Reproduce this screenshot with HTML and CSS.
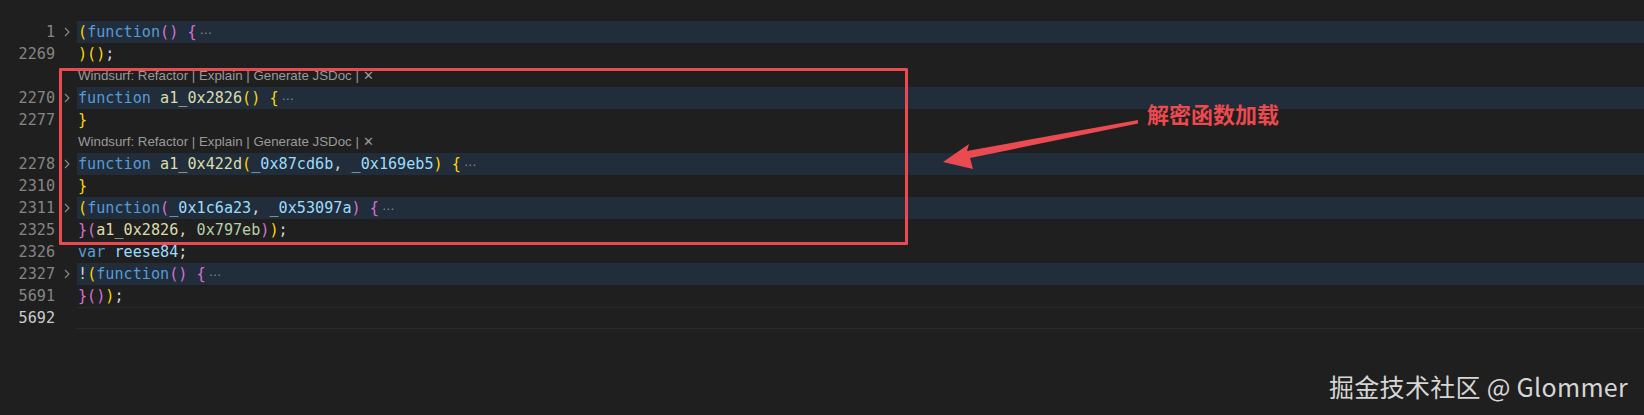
FILE: index.html
```html
<!DOCTYPE html>
<html lang="zh">
<head>
<meta charset="utf-8">
<title>Editor</title>
<link rel="stylesheet" href="styles.css">
</head>
<body>
<div class="page">
  <div class="editor">
    <div class="row folded">
      <span class="ln">1</span><span class="fold"><svg viewBox="0 0 6 10" width="6" height="10"><path d="M1 1 L5 5 L1 9" /></svg></span>
      <span class="code"><span class="b1">(</span><span class="kw">function</span><span class="b2">()</span> <span class="b2">{</span><span class="dots">⋯</span></span>
    </div>
    <div class="row">
      <span class="ln">2269</span><span class="fold"></span>
      <span class="code"><span class="b1">)()</span><span class="pn">;</span></span>
    </div>
    <div class="lens"><span class="ln"></span><span class="fold"></span><span class="lens-text">Windsurf: Refactor | Explain | Generate JSDoc | ✕</span></div>
    <div class="row folded">
      <span class="ln">2270</span><span class="fold"><svg viewBox="0 0 6 10" width="6" height="10"><path d="M1 1 L5 5 L1 9" /></svg></span>
      <span class="code"><span class="kw">function</span> <span class="fn">a1_0x2826</span><span class="b1">()</span> <span class="b1">{</span><span class="dots">⋯</span></span>
    </div>
    <div class="row">
      <span class="ln">2277</span><span class="fold"></span>
      <span class="code"><span class="b1">}</span></span>
    </div>
    <div class="lens"><span class="ln"></span><span class="fold"></span><span class="lens-text">Windsurf: Refactor | Explain | Generate JSDoc | ✕</span></div>
    <div class="row folded">
      <span class="ln">2278</span><span class="fold"><svg viewBox="0 0 6 10" width="6" height="10"><path d="M1 1 L5 5 L1 9" /></svg></span>
      <span class="code"><span class="kw">function</span> <span class="fn">a1_0x422d</span><span class="b1">(</span><span class="pr">_0x87cd6b</span><span class="pn">,</span> <span class="pr">_0x169eb5</span><span class="b1">)</span> <span class="b1">{</span><span class="dots">⋯</span></span>
    </div>
    <div class="row">
      <span class="ln">2310</span><span class="fold"></span>
      <span class="code"><span class="b1">}</span></span>
    </div>
    <div class="row folded">
      <span class="ln">2311</span><span class="fold"><svg viewBox="0 0 6 10" width="6" height="10"><path d="M1 1 L5 5 L1 9" /></svg></span>
      <span class="code"><span class="b1">(</span><span class="kw">function</span><span class="b2">(</span><span class="pr">_0x1c6a23</span><span class="pn">,</span> <span class="pr">_0x53097a</span><span class="b2">)</span> <span class="b2">{</span><span class="dots">⋯</span></span>
    </div>
    <div class="row">
      <span class="ln">2325</span><span class="fold"></span>
      <span class="code"><span class="b2">}(</span><span class="fn">a1_0x2826</span><span class="pn">,</span> <span class="num">0x797eb</span><span class="b2">)</span><span class="b1">)</span><span class="pn">;</span></span>
    </div>
    <div class="row">
      <span class="ln">2326</span><span class="fold"></span>
      <span class="code"><span class="kw">var</span> <span class="pr">reese84</span><span class="pn">;</span></span>
    </div>
    <div class="row folded">
      <span class="ln">2327</span><span class="fold"><svg viewBox="0 0 6 10" width="6" height="10"><path d="M1 1 L5 5 L1 9" /></svg></span>
      <span class="code"><span class="pn">!</span><span class="b1">(</span><span class="kw">function</span><span class="b2">()</span> <span class="b2">{</span><span class="dots">⋯</span></span>
    </div>
    <div class="row">
      <span class="ln">5691</span><span class="fold"></span>
      <span class="code"><span class="b2">}()</span><span class="b1">)</span><span class="pn">;</span></span>
    </div>
    <div class="row current">
      <span class="ln">5692</span><span class="fold"></span>
      <span class="code"></span>
    </div>
  </div>

  <div class="highlight-box"></div>
  <svg class="arrow" viewBox="0 0 200 54" width="200" height="54">
    <polygon points="2,43 28,25 26,32 197,1 197,4.5 29,39 32,50" />
  </svg>
  <div class="label">解密函数加载</div>
  <div class="watermark">掘金技术社区 @ Glommer</div>
</div>
</body>
</html>
```

FILE: styles.css
```css
html, body {
  margin: 0;
  padding: 0;
  background: #1f1f1f;
}

.page {
  position: relative;
  width: 1644px;
  height: 415px;
  overflow: hidden;
  background: #1f1f1f;
}

.editor {
  display: flex;
  flex-direction: column;
  padding-top: 21px;
  font-family: "DejaVu Sans Mono", "Liberation Mono", monospace;
  font-size: 15.15px;
  color: #d4d4d4;
}

.row, .lens {
  display: grid;
  grid-template-columns: 55px 22px 1fr;
  height: 22px;
  align-items: center;
  line-height: 22px;
  white-space: pre;
}

.ln {
  text-align: right;
  color: #858585;
}

.fold {
  display: flex;
  align-items: center;
  justify-content: center;
  height: 22px;
  padding-left: 2px;
}

.fold svg path {
  fill: none;
  stroke: #8c8c8c;
  stroke-width: 1.1;
}

.code {
  height: 22px;
  padding-left: 1px;
}

.folded .code {
  background: #212d3a;
}

.current .ln {
  color: #cccccc;
}

.current .code {
  box-sizing: border-box;
  border-top: 1px solid #2a2a2a;
  border-bottom: 1px solid #2a2a2a;
}

.lens-text {
  font-family: "Liberation Sans", Arial, sans-serif;
  font-size: 13.3px;
  color: #9a9a9a;
  padding-left: 1px;
}

.kw { color: #569cd6; }
.fn { color: #dcdcaa; }
.pr { color: #9cdcfe; }
.num { color: #b5cea8; }
.pn { color: #d4d4d4; }
.b1 { color: #ffd700; }
.b2 { color: #da70d6; }

.dots {
  font-family: "DejaVu Sans", sans-serif;
  color: #8a8a8a;
  font-size: 12px;
  margin-left: 3px;
}

.highlight-box {
  position: absolute;
  left: 59px;
  top: 68px;
  width: 843px;
  height: 171px;
  border: 3px solid #ea4a50;
  border-radius: 1px;
}

.arrow {
  position: absolute;
  left: 941px;
  top: 119px;
}

.arrow polygon {
  fill: #ea4a50;
}

.label {
  position: absolute;
  left: 1147px;
  top: 98px;
  font-family: "Noto Sans CJK SC", "Noto Sans", sans-serif;
  font-size: 22px;
  font-weight: 700;
  line-height: 30px;
  color: #ea4a50;
}

.watermark {
  position: absolute;
  right: 16px;
  top: 368px;
  font-family: "Noto Sans CJK SC", "Noto Sans", sans-serif;
  font-size: 25px;
  line-height: 36px;
  color: #d6d6d6;
  letter-spacing: 0.3px;
}
```
